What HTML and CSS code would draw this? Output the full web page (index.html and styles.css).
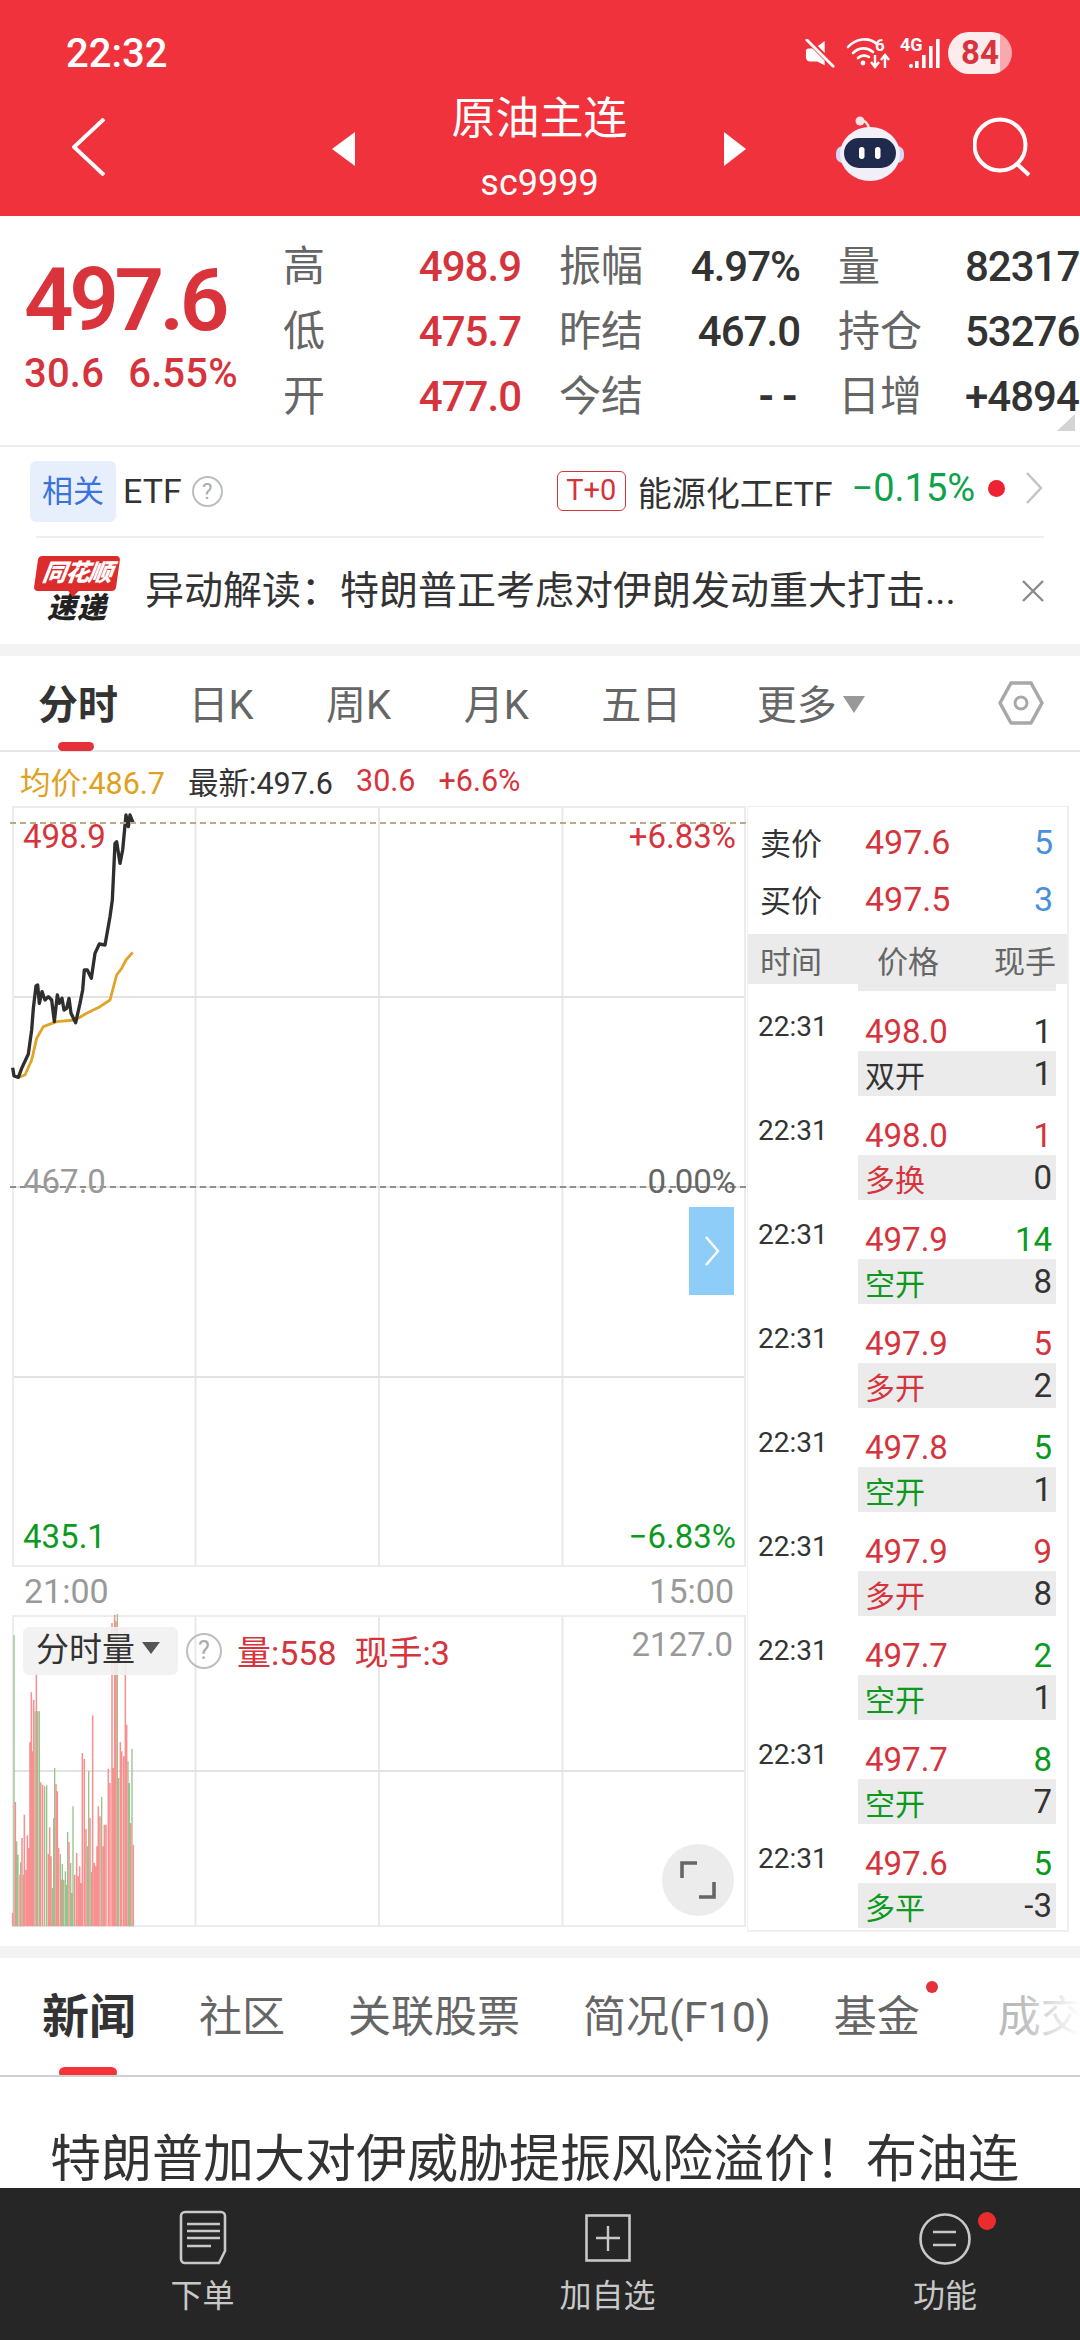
FILE: index.html
```html
<!DOCTYPE html>
<html lang="zh">
<head>
<meta charset="utf-8">
<title>原油主连</title>
<link rel="stylesheet" href="styles.css">
</head>
<body>
<div class="page">
  <header class="header">
    <div class="status">
      <span class="clock">22:32</span>
      <div class="status-icons">
        <svg class="ic-mute" viewBox="0 0 32 32"><path d="M1 13c0-2 1-3 3-3h6l11-8v26l-8-4H5c-3 0-4-3-4-5z" fill="#fff"/><path d="M2 0l30 30" stroke="#f0323c" stroke-width="6"/><path d="M2 1l28 28" stroke="#fff" stroke-width="3" stroke-linecap="round"/></svg>
        <svg class="ic-wifi" viewBox="0 0 46 34"><g fill="none" stroke="#fff" stroke-width="2.6" stroke-linecap="round"><path d="M1 11C9 2 22 1 30 8"/><path d="M6 17c6-6 14-6 20-1"/><path d="M11 22c3-3 8-3 11-1"/></g><circle cx="16" cy="27" r="2.4" fill="#fff"/><text x="28" y="15" class="svg-six">6</text><path d="M28 19v11m-4-4l4 5 4-5M38 32V20m-4 4l4-5 4 5" fill="none" stroke="#fff" stroke-width="2.4"/></svg>
        <svg class="ic-signal" viewBox="0 0 42 34"><text x="0" y="15" class="svg-4g">4G</text><g fill="#fff"><circle cx="11" cy="30" r="2"/><rect x="15" y="25" width="3.6" height="7"/><rect x="22" y="19" width="3.6" height="13"/><rect x="29" y="10" width="3.6" height="22"/><rect x="36" y="3" width="3.6" height="29"/></g></svg>
        <span class="battery">84</span>
      </div>
    </div>
    <div class="nav">
      <svg class="ic-back" viewBox="0 0 33 58"><path d="M32 1L2 29l30 28" fill="none" stroke="#fff" stroke-width="4"/></svg>
      <span class="tri tri-left"></span>
      <div class="title-block">
        <div class="title">原油主连</div>
        <div class="code">sc9999</div>
      </div>
      <span class="tri tri-right"></span>
      <svg class="ic-robot" viewBox="0 0 70 66">
        <path d="M24 6c5-1 8 2 9 8" fill="none" stroke="#f3e3e8" stroke-width="2.5"/>
        <circle cx="24" cy="6" r="4.5" fill="#f8e4e6"/>
        <rect x="0" y="31" width="68" height="17" rx="7" fill="#d6d6f2"/>
        <ellipse cx="34" cy="39" rx="30" ry="27" fill="#f2eff9"/>
        <rect x="8" y="23" width="52" height="30" rx="15" fill="#1f2a4d"/>
        <rect x="23" y="32" width="5.5" height="12" rx="2.7" fill="#fff"/>
        <rect x="39" y="32" width="5.5" height="12" rx="2.7" fill="#fff"/>
      </svg>
      <svg class="ic-search" viewBox="0 0 60 62"><circle cx="27" cy="28" r="25.5" fill="none" stroke="#fff" stroke-width="4"/><path d="M44 47l12 11" stroke="#fff" stroke-width="4"/></svg>
    </div>
  </header>

  <section class="quote">
    <div class="quote-main">
      <div class="big-price">497.6</div>
      <div class="big-change"><span>30.6</span><span>6.55%</span></div>
    </div>
    <div class="stats">
      <div class="stat"><span class="lbl">高</span><span class="val r">498.9</span></div>
      <div class="stat"><span class="lbl">振幅</span><span class="val">4.97%</span></div>
      <div class="stat stat-wide"><span class="lbl">量</span><span class="val">82317</span></div>
      <div class="stat"><span class="lbl">低</span><span class="val r">475.7</span></div>
      <div class="stat"><span class="lbl">昨结</span><span class="val">467.0</span></div>
      <div class="stat stat-wide"><span class="lbl">持仓</span><span class="val">53276</span></div>
      <div class="stat"><span class="lbl">开</span><span class="val r">477.0</span></div>
      <div class="stat"><span class="lbl">今结</span><span class="val val-empty">--</span></div>
      <div class="stat stat-wide"><span class="lbl">日增</span><span class="val">+4894</span></div>
    </div>
    <span class="corner"></span>
  </section>

  <section class="etf">
    <span class="chip">相关</span>
    <span class="etf-name">ETF</span>
    <span class="help help-s">?</span>
    <span class="t0">T+0</span>
    <span class="etf-fund">能源化工ETF</span>
    <span class="etf-pct">−0.15%</span>
    <span class="dot"></span>
    <svg class="ic-more" viewBox="0 0 18 32"><path d="M2 1l14 15L2 31" fill="none" stroke="#c4c4c4" stroke-width="2.5"/></svg>
  </section>

  <section class="brief">
    <div class="logo">
      <div class="logo-top"><span>同花顺</span></div>
      <div class="logo-bottom">速递</div>
    </div>
    <div class="brief-text">异动解读：特朗普正考虑对伊朗发动重大打击...</div>
    <svg class="ic-close" viewBox="0 0 24 24"><path d="M2 2l20 20M22 2L2 22" stroke="#8a8a8a" stroke-width="2.4"/></svg>
  </section>

  <div class="band"></div>

  <nav class="tabs">
    <span class="tab tab-on">分时</span>
    <span class="tab">日K</span>
    <span class="tab">周K</span>
    <span class="tab">月K</span>
    <span class="tab">五日</span>
    <span class="tab tab-more">更多<i class="caret"></i></span>
    <svg class="ic-hex" viewBox="0 0 46 44"><path d="M13 2h20l11 20-11 20H13L2 22z" fill="none" stroke="#a8a8a8" stroke-width="3.5" stroke-linejoin="round"/><circle cx="23" cy="22" r="6" fill="none" stroke="#a8a8a8" stroke-width="3"/></svg>
  </nav>

  <div class="legend">
    <span class="avg">均价:486.7</span>
    <span class="latest">最新:497.6</span>
    <span class="r">30.6</span>
    <span class="r">+6.6%</span>
  </div>

  <section class="board">
    <div class="charts">
      <div class="chart">
        <svg class="line-svg" viewBox="0 0 540 840">
          <path d="M55 832L75 825 95 780 110 715 130 680 170 665 225 660 260 640 300 620 330 600 350 525 365 505 378 480 398 457" fill="none" stroke="#e0a428" stroke-width="8.5" stroke-linejoin="round"/>
          <path d="M38 803L42 828 55 832 65 805 85 762 95 690 100 625 108 558 113 555 118 610 126 575 135 600 145 590 155 600 163 665 172 585 178 610 186 595 192 630 200 625 207 595 213 640 227 668 240 610 248 570 253 510 262 510 274 535 285 460 298 432 315 435 330 350 337 300 345 130 350 125 360 190 368 150 378 45 385 80 390 45 400 70" fill="none" stroke="#2e2e2e" stroke-width="10" stroke-linejoin="round"/>
        </svg>
        <div class="dash dash-top"></div>
        <div class="dash dash-mid"></div>
        <span class="axis a-tl r">498.9</span>
        <span class="axis a-tr r">+6.83%</span>
        <span class="axis a-ml">467.0</span>
        <span class="axis a-mr">0.00%</span>
        <span class="axis a-bl g">435.1</span>
        <span class="axis a-br g">−6.83%</span>
        <div class="drawer"><svg viewBox="0 0 16 30"><path d="M2 1l12 14L2 29" fill="none" stroke="#fff" stroke-width="2.4"/></svg></div>
      </div>
      <div class="timeline"><span>21:00</span><span>15:00</span></div>
      <div class="volume">
        <svg class="vol-svg" viewBox="0 0 540 1020">
          <path d="M42 985V112M50 985V730M54 985V770M62 985V793M70 985V830M105 985V340M113 985V340M118 985V340M134 985V565M140 985V562M157 985V870M161 985V660M164 985V510M181 985V768M187 985V798M191 985V845M196 985V820M199 985V860M203 985V702M212 985V795M215 985V885M219 985V625M262 985V745M266 985V518M274 985V822M305 985V597M352 985V48M356 985V540M384 985V490M388 985V555M396 985V453" stroke="#97c48c" stroke-width="4" fill="none"/>
          <path d="M38 985V945M46 985V612M60 985V830M66 985V720M73 985V650M78 985V815M82 985V712M86 985V750M90 985V432M94 985V283M98 985V460M101 985V305M109 985V225M122 985V553M128 985V560M145 985V768M149 985V688M153 985V775M168 985V558M172 985V580M176 985V750M185 985V845M207 985V732M224 985V830M230 985V765M235 985V835M239 985V805M243 985V855M247 985V465M253 985V482M258 985V693M270 985V660M278 985V352M283 985V795M287 985V805M291 985V745M295 985V625M300 985V655M309 985V745M313 985V680M318 985V680M325 985V512M330 985V555M336 985V75M340 985V510M344 985V50M348 985V70M361 985V432M365 985V460M371 985V475M376 985V100M380 985V380M392 985V675M400 985V740" stroke="#f79090" stroke-width="4.6" fill="none"/>
        </svg>
        <div class="vol-head">
          <span class="vol-chip">分时量<i class="caret caret-dark"></i></span>
          <span class="help help-l">?</span>
          <span class="r vol-num">量:558</span>
          <span class="r vol-num">现手:3</span>
        </div>
        <span class="axis a-vol">2127.0</span>
        <div class="expand"><svg viewBox="0 0 38 38"><path d="M18 2H3v15M35 21v15H20" fill="none" stroke="#666" stroke-width="3.6"/></svg></div>
      </div>
    </div>

    <aside class="ticks">
      <div class="book"><span>卖价</span><span class="r">497.6</span><span class="b">5</span></div>
      <div class="book"><span>买价</span><span class="r">497.5</span><span class="b">3</span></div>
      <div class="tick-head"><span>时间</span><span>价格</span><span>现手</span></div>
      <div class="sliver"></div>
      <div class="tick"><span class="t">22:31</span><div class="tb"><div class="tl"><span class="r">498.0</span><span>1</span></div><div class="ts"><span>双开</span><span>1</span></div></div></div>
      <div class="tick"><span class="t">22:31</span><div class="tb"><div class="tl"><span class="r">498.0</span><span class="r">1</span></div><div class="ts"><span class="r">多换</span><span>0</span></div></div></div>
      <div class="tick"><span class="t">22:31</span><div class="tb"><div class="tl"><span class="r">497.9</span><span class="g">14</span></div><div class="ts"><span class="g">空开</span><span>8</span></div></div></div>
      <div class="tick"><span class="t">22:31</span><div class="tb"><div class="tl"><span class="r">497.9</span><span class="r">5</span></div><div class="ts"><span class="r">多开</span><span>2</span></div></div></div>
      <div class="tick"><span class="t">22:31</span><div class="tb"><div class="tl"><span class="r">497.8</span><span class="g">5</span></div><div class="ts"><span class="g">空开</span><span>1</span></div></div></div>
      <div class="tick"><span class="t">22:31</span><div class="tb"><div class="tl"><span class="r">497.9</span><span class="r">9</span></div><div class="ts"><span class="r">多开</span><span>8</span></div></div></div>
      <div class="tick"><span class="t">22:31</span><div class="tb"><div class="tl"><span class="r">497.7</span><span class="g">2</span></div><div class="ts"><span class="g">空开</span><span>1</span></div></div></div>
      <div class="tick"><span class="t">22:31</span><div class="tb"><div class="tl"><span class="r">497.7</span><span class="g">8</span></div><div class="ts"><span class="g">空开</span><span>7</span></div></div></div>
      <div class="tick"><span class="t">22:31</span><div class="tb"><div class="tl"><span class="r">497.6</span><span class="g">5</span></div><div class="ts"><span class="g">多平</span><span>-3</span></div></div></div>
    </aside>
  </section>

  <div class="band band-low"></div>

  <nav class="news-tabs">
    <span class="ntab ntab-on">新闻</span>
    <span class="ntab">社区</span>
    <span class="ntab">关联股票</span>
    <span class="ntab">简况(F10)</span>
    <span class="ntab ntab-dot">基金</span>
    <span class="ntab ntab-fade">成交</span>
  </nav>

  <main class="article">
    <h1 class="headline">特朗普加大对伊威胁提振风险溢价！布油连</h1>
  </main>

  <footer class="footer">
    <div class="fbtn">
      <svg class="f-order" viewBox="0 0 50 55"><path d="M7 2h36a4 4 0 0 1 4 4v35l-6 12H7a4 4 0 0 1-4-4V6a4 4 0 0 1 4-4z" fill="none" stroke="#c8c8c8" stroke-width="2.6"/><path d="M9 14h33M9 21h33M9 28h33M9 36h24" stroke="#c8c8c8" stroke-width="2.6"/></svg>
      <span>下单</span>
    </div>
    <div class="fbtn">
      <svg class="f-add" viewBox="0 0 46 48"><rect x="1.5" y="1.5" width="43" height="45" fill="none" stroke="#c8c8c8" stroke-width="2.6"/><path d="M23 12v25M11 24h24" stroke="#c8c8c8" stroke-width="2.4"/></svg>
      <span>加自选</span>
    </div>
    <div class="fbtn">
      <div class="f-wrap">
        <svg class="f-func" viewBox="0 0 52 52"><circle cx="26" cy="26" r="24.5" fill="none" stroke="#c8c8c8" stroke-width="2.6"/><path d="M14 19h23M14 32h23" stroke="#c8c8c8" stroke-width="2.6"/></svg>
        <i class="f-dot"></i>
      </div>
      <span>功能</span>
    </div>
  </footer>
</div>
</body>
</html>
```
FILE: styles.css
```css
* { box-sizing: border-box; }
html, body { margin: 0; padding: 0; }
body { background: #fff; font-family: Roboto, "Noto Sans CJK SC", sans-serif; color: #333; }
.page { width: 1080px; height: 2340px; display: flex; flex-direction: column; overflow: hidden; }
.r { color: #d5343c; }
.g { color: #0b9a1e; }
.b { color: #4a90d9; }

.header { height: 216px; background: #f0323c; color: #fff; flex: none; }
.status { height: 78px; padding: 0 68px 0 66px; display: flex; justify-content: space-between; align-items: flex-start; }
.clock { font-size: 40px; font-weight: 500; line-height: 36px; margin-top: 36px; }
.status-icons { display: flex; align-items: flex-start; margin-top: 32px; }
.ic-mute { width: 30px; height: 30px; margin: 7px 0 0 0; }
.ic-wifi { width: 46px; height: 34px; margin: 4px 0 0 12px; overflow: visible; }
.svg-six { font: 700 17px Roboto, sans-serif; fill: #fff; }
.ic-signal { width: 42px; height: 34px; margin: 4px 0 0 7px; overflow: visible; }
.svg-4g { font: 700 18px Roboto, sans-serif; fill: #fff; }
.battery { width: 64px; height: 42px; margin-left: 6px; border-radius: 21px; background: linear-gradient(90deg, #fdeced 82%, #f8a9ad 82%); color: #d9343e; font-size: 33px; font-weight: 700; line-height: 42px; text-align: center; }
.nav { height: 138px; padding-left: 72px; display: flex; align-items: center; }
.ic-back { width: 33px; height: 58px; flex: none; margin-top: 0; }
.tri { width: 0; height: 0; border-top: 17px solid transparent; border-bottom: 17px solid transparent; flex: none; margin-top: 3px; }
.tri-left { margin-left: 227px; border-right: 23px solid #fff; }
.tri-right { border-left: 22px solid #fff; }
.title-block { width: 369px; height: 138px; padding-top: 13px; text-align: center; flex: none; }
.title { font-size: 44px; line-height: 56px; }
.code { font-size: 36px; line-height: 44px; margin-top: 14px; }
.ic-robot { width: 70px; height: 66px; margin-left: 90px; flex: none; margin-top: 2px; }
.ic-search { width: 60px; height: 62px; margin-left: 67px; flex: none; margin-top: 2px; }

.quote { height: 231px; flex: none; display: flex; position: relative; border-bottom: 2px solid #eeeeee; }
.quote-main { width: 283px; padding: 40px 0 0 24px; flex: none; }
.big-price { font-size: 87px; font-weight: 600; line-height: 88px; letter-spacing: -4.5px; color: #d9333b; }
.big-change { display: flex; gap: 24px; font-size: 40px; font-weight: 500; line-height: 46px; margin-top: 7px; color: #d5343c; letter-spacing: 0.2px; }
.stats { display: grid; grid-template-columns: 238px 241px 260px; grid-auto-rows: 65px; column-gap: 38px; padding-top: 18px; }
.stat { display: flex; justify-content: space-between; align-items: center; white-space: nowrap; }
.stat-wide { justify-content: flex-start; }
.stat-wide .lbl { width: 127px; flex: none; }
.lbl { font-size: 42px; color: #666; margin-top: -9px; }
.val { font-size: 42px; font-weight: 500; color: #333; letter-spacing: -1px; }
.val-empty { letter-spacing: 7px; margin-right: -5px; font-weight: 700; }
.stat .val.r { color: #d5343c; }
.corner { position: absolute; right: 5px; bottom: 14px; width: 0; height: 0; border-left: 18px solid transparent; border-bottom: 17px solid #d4d4d4; }

.etf { height: 91px; flex: none; display: flex; align-items: center; margin: 0 36px; padding-bottom: 1px; border-bottom: 2px solid #eeeeee; position: relative; }
.chip { width: 86px; height: 61px; margin-left: -6px; border-radius: 6px; background: #e8effc; color: #3b72dc; font-size: 31px; line-height: 61px; text-align: center; flex: none; }
.etf-name { font-size: 34px; margin-left: 7px; color: #333; }
.help { border-radius: 50%; border: 2px solid #bdbdbd; color: #aaa; text-align: center; display: inline-block; flex: none; }
.help-s { width: 31px; height: 31px; font-size: 22px; line-height: 27px; margin-left: 10px; }
.t0 { margin-left: 334px; width: 69px; height: 40px; border: 1.5px solid #d5343c; border-radius: 6px; color: #d5343c; font-size: 29px; line-height: 37px; text-align: center; flex: none; }
.etf-fund { font-size: 34px; margin-left: 12px; color: #333; white-space: nowrap; }
.etf-pct { font-size: 38px; color: #0fa24a; margin-left: 19px; white-space: nowrap; margin-top: -6px; }
.dot { width: 17px; height: 17px; border-radius: 50%; background: #ef2233; margin-left: 13px; flex: none; margin-top: -6px; }
.ic-more { width: 18px; height: 32px; margin-left: 20px; flex: none; margin-top: -6px; }

.brief { height: 106px; flex: none; display: flex; align-items: center; padding: 0 36px; }
.logo { width: 82px; flex: none; margin-top: -2px; }
.logo-top { height: 35px; background: #dd2c2c; border-radius: 4px; transform: skewX(-8deg); color: #fff; text-align: center; position: relative; }
.logo-top::after { content: ""; position: absolute; left: 34px; bottom: -6px; border-left: 6px solid transparent; border-right: 6px solid transparent; border-top: 7px solid #dd2c2c; }
.logo-top span { font-size: 24px; font-weight: 900; font-style: italic; line-height: 35px; letter-spacing: -1px; }
.logo-bottom { font-size: 29px; font-weight: 900; font-style: italic; line-height: 34px; color: #222; text-align: center; letter-spacing: 1px; }
.brief-text { font-size: 39px; line-height: 50px; margin-left: 27px; white-space: nowrap; color: #333; letter-spacing: 0; width: 820px; flex: none; }
.ic-close { width: 24px; height: 24px; margin-left: 56px; flex: none; }

.band { height: 12px; background: #f3f3f3; flex: none; }
.band-low { margin-top: 14px; }

.tabs { height: 96px; flex: none; display: flex; align-items: center; padding: 0 36px 0 38px; border-bottom: 2px solid #e6e6e6; gap: 72.5px; position: relative; }
.tab { font-size: 40px; line-height: 50px; color: #666; white-space: nowrap; position: relative; margin-top: 6px; }
.tab-on { font-weight: 700; color: #333; margin-right: -2px; }
.tab-on::after { content: ""; position: absolute; left: 20px; top: 61px; width: 36px; height: 9px; border-radius: 5px; background: #e5303a; }
.tab-more { margin-left: 3px; }
.caret { display: inline-block; width: 0; height: 0; margin-left: 6px; vertical-align: 6px; border-left: 11px solid transparent; border-right: 11px solid transparent; border-top: 17px solid #999; }
.ic-hex { width: 46px; height: 44px; margin-left: auto; flex: none; }

.legend { height: 54px; flex: none; display: flex; align-items: center; padding: 3px 0 0 20px; font-size: 30.5px; gap: 23px; color: #333; white-space: nowrap; }
.avg { color: #e0a020; }

.board { display: flex; flex: none; padding-left: 12px; }
.charts { width: 734px; flex: none; }
.chart { height: 761px; position: relative; border: solid #ececec; border-width: 2px 2px 2px 2px; background-image: linear-gradient(#e3e3e3 2px, transparent 2px), linear-gradient(90deg, #e8e8e8 2px, transparent 2px); background-size: 183.5px 190px; background-position: -3px -2px; }
.line-svg { position: absolute; left: -14px; top: -8px; width: 180px; height: 280px; }
.dash { position: absolute; left: -4px; right: -2px; height: 0; border-top: 2px dashed #b9aa88; }
.dash-top { top: 14px; }
.dash-mid { top: 378px; border-top-color: #8e8e8e; }
.axis { position: absolute; font-size: 33px; line-height: 40px; white-space: nowrap; }
.a-tl { left: 9px; top: 9px; }
.a-tr { right: 8px; top: 9px; }
.a-ml { left: 9px; top: 354px; color: #999; }
.a-mr { right: 8px; top: 354px; color: #666; }
.a-bl { left: 9px; top: 709px; }
.a-br { right: 8px; top: 709px; }
.drawer { position: absolute; right: 10px; top: 399px; width: 45px; height: 88px; background: #8dcdf8; display: flex; align-items: center; justify-content: center; }
.drawer svg { width: 16px; height: 30px; }
.timeline { height: 48px; display: flex; justify-content: space-between; align-items: center; padding: 0 12px; font-size: 34px; color: #999; }
.volume { height: 312px; position: relative; border: solid #ececec; border-width: 2px 2px 2px 2px; background-image: linear-gradient(#e3e3e3 2px, transparent 2px), linear-gradient(90deg, #e8e8e8 2px, transparent 2px); background-size: 183.5px 155px; background-position: -3px -2px; }
.vol-svg { position: absolute; left: -14px; top: -19px; width: 180px; height: 340px; overflow: visible; }
.vol-head { position: absolute; left: 9px; top: 9px; display: flex; align-items: center; }
.vol-chip { width: 155px; height: 48px; padding-left: 13px; border-radius: 6px; background: rgba(240, 240, 240, 0.88); font-size: 33px; line-height: 46px; color: #333; white-space: nowrap; }
.caret-dark { margin-left: 7px; border-left-width: 9px; border-right-width: 9px; border-top: 12px solid #555; vertical-align: 7px; }
.help-l { width: 36px; height: 36px; font-size: 25px; line-height: 32px; margin-left: 8px; }
.vol-num { font-size: 34px; margin-left: 15px; white-space: nowrap; }
.vol-num + .vol-num { margin-left: 18px; }
.a-vol { right: 11px; top: 8px; color: #999; }
.expand { position: absolute; right: 10px; bottom: 9px; width: 72px; height: 72px; border-radius: 50%; background: #ececec; display: flex; align-items: center; justify-content: center; }
.expand svg { width: 38px; height: 38px; }

.ticks { width: 322px; height: 1126px; margin-left: 1px; flex: none; border: 2px solid #efefef; border-width: 1px 2px 2px 1px; overflow: hidden; }
.book { height: 57px; display: grid; grid-template-columns: 105px 1fr auto; align-items: center; padding: 0 14px 0 12px; font-size: 31px; }
.book:first-child { margin-top: 6px; }
.book .r { font-size: 34px; }
.book .b { font-size: 34px; }
.tick-head { height: 50px; margin-top: 7px; background: #ebebeb; display: grid; grid-template-columns: 117px 1fr auto; align-items: center; padding: 0 11px 0 12px; font-size: 31px; color: #666; }
.sliver { height: 7px; width: 198px; margin-left: 110px; background: #ebebeb; margin-bottom: 15px; }
.tick { height: 104px; display: flex; }
.t { width: 110px; flex: none; padding-left: 10px; font-size: 28px; line-height: 34px; margin-top: 4px; color: #333; }
.tb { width: 198px; flex: none; }
.tl, .ts { height: 45px; display: flex; justify-content: space-between; align-items: center; padding: 0 4px 0 7px; font-size: 33px; color: #333; }
.tl { padding-top: 5px; }
.ts { background: #ebebeb; font-size: 33px; }
.ts span:first-child { font-size: 30px; }
.tick .tb .r { color: #d5343c; }

.news-tabs { height: 119px; flex: none; display: flex; align-items: center; padding-left: 42px; gap: 63px; border-bottom: 2px solid #cfcfcf; position: relative; white-space: nowrap; overflow: hidden; }
.ntab { font-size: 43px; color: #666; line-height: 56px; position: relative; flex: none; margin-top: 0; }
.ntab-on { font-size: 47px; font-weight: 700; color: #333; }
.ntab-on::after { content: ""; position: absolute; left: 17px; top: 78px; width: 58px; height: 11px; border-radius: 6px; background: #f5333a; }
.ntab-dot::after { content: ""; position: absolute; right: -18px; top: -8px; width: 12px; height: 12px; border-radius: 50%; background: #e5303a; }
.ntab-fade { margin-left: 15px; color: #bbb; }
.news-tabs::after { content: ""; position: absolute; right: 0; top: 0; bottom: 0; width: 60px; background: linear-gradient(90deg, rgba(255,255,255,0), #fff); }

.article { flex: 1; min-height: 0; overflow: hidden; padding: 56px 0 0 50px; }
.headline { margin: 0; font-size: 51px; line-height: 54px; font-weight: 400; color: #333; white-space: nowrap; }

.footer { height: 152px; flex: none; background: #262626; display: grid; grid-template-columns: 405px 405px 270px; color: #c8c8c8; }
.fbtn { display: flex; flex-direction: column; align-items: center; height: 152px; position: relative; font-size: 32px; }
.fbtn > span { position: absolute; top: 87px; line-height: 42px; white-space: nowrap; }
.f-order { width: 50px; height: 55px; margin-top: 22px; }
.f-add { width: 46px; height: 48px; margin-top: 26px; }
.f-wrap { position: relative; margin-top: 25px; height: 52px; }
.f-func { width: 52px; height: 52px; display: block; }
.f-dot { position: absolute; left: 59px; top: -1px; width: 18px; height: 18px; border-radius: 50%; background: #ec2c2c; }
```
